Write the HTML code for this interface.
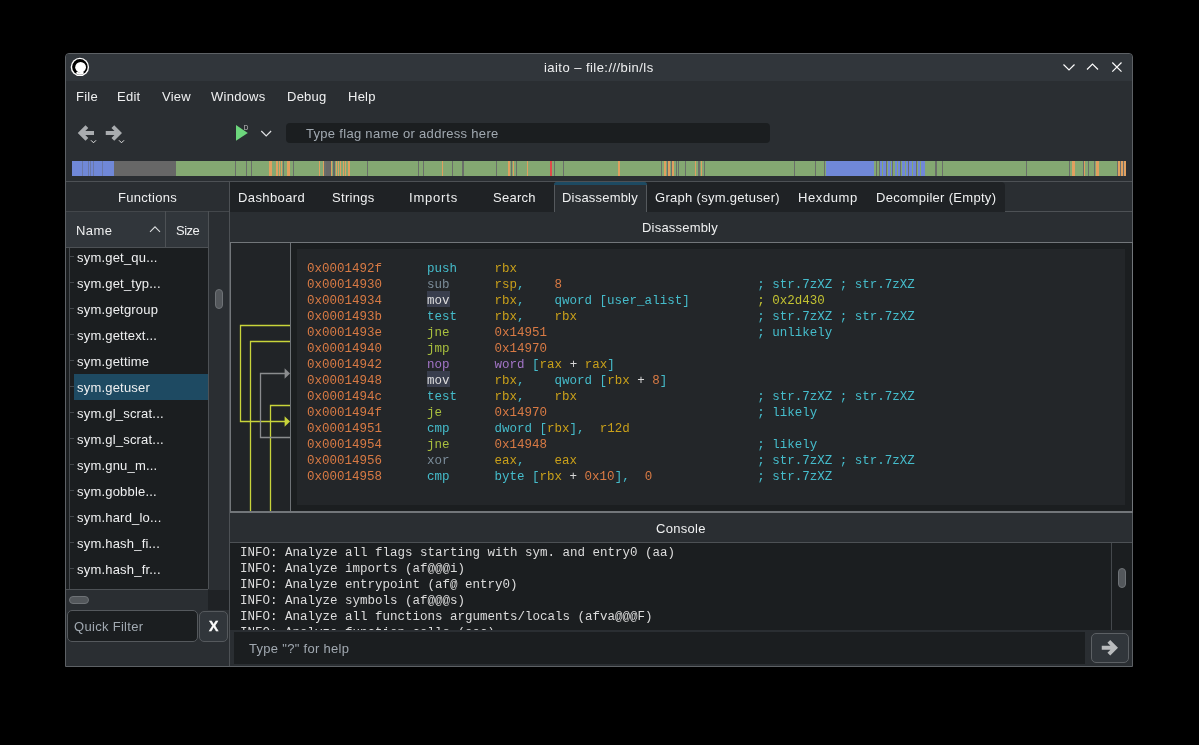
<!DOCTYPE html>
<html><head><meta charset="utf-8">
<style>
*{margin:0;padding:0;box-sizing:border-box}
html,body{width:1199px;height:745px;background:#000;overflow:hidden;font-family:"Liberation Sans",sans-serif;font-size:13px;color:#eff0f1}
.a{position:absolute}
.t{position:absolute;white-space:nowrap;line-height:16px;letter-spacing:0.25px;padding-top:1px}
.m{position:absolute;font-family:"Liberation Mono",monospace;font-size:12.5px;white-space:pre;line-height:16px}
.ad{color:#d87a44}.cy{color:#45bccb}.gy{color:#7b8c99}.go{color:#c9a01a}.jm{color:#a9bf3e}.pu{color:#a274c6}.wh{color:#d8d8d8}.ye{color:#c2c232}.nu{color:#d87a44}
.hl{color:#dcdcdc}
.fn{position:absolute;left:77px;white-space:nowrap;line-height:16px;letter-spacing:0.2px;padding-top:1px}
.tick{position:absolute;left:70px;width:4px;height:1px;background:#4d5155}
.ci{position:absolute;left:240px;font-family:"Liberation Mono",monospace;font-size:12.5px;white-space:pre;line-height:16px;color:#dcdcdc}
</style></head><body>
<div id="root" style="position:absolute;left:0;top:0;width:1199px;height:745px;will-change:transform">

<!-- window frame -->
<div class="a" style="left:65px;top:53px;width:1068px;height:614px;background:#2a2e32;border:1px solid #5d6165;border-radius:4px 4px 0 0"></div>
<div class="a" style="left:66px;top:54px;width:1066px;height:27px;background:#31363b;border-radius:3px 3px 0 0"></div>
<!-- app icon -->
<svg class="a" style="left:68px;top:55px" width="24" height="24" viewBox="0 0 24 24">
<circle cx="11.9" cy="11.9" r="9.2" fill="#fff"/>
<circle cx="11.9" cy="11.9" r="7.8" fill="#000"/>
<circle cx="12.6" cy="12.3" r="5.4" fill="#fff"/>
<path d="M14.6 17.9 A6.6 6.6 0 0 1 9.4 18.0" stroke="#fff" stroke-width="2.4" fill="none" stroke-linecap="round"/>
</svg>
<div class="t" style="left:544px;top:59px;letter-spacing:0.45px">iaito – file:///bin/ls</div>
<!-- window buttons -->
<svg class="a" style="left:1060px;top:58px" width="66" height="18" viewBox="0 0 66 18">
<path d="M3.5 6.5 L9 12 L14.5 6.5" stroke="#fcfcfc" stroke-width="1.2" fill="none"/>
<path d="M27 11.5 L32.5 6 L38 11.5" stroke="#fcfcfc" stroke-width="1.2" fill="none"/>
<path d="M52.3 4.5 L61.5 13.7 M61.5 4.5 L52.3 13.7" stroke="#fcfcfc" stroke-width="1.2" fill="none"/>
</svg>
<!-- menu -->
<div class="t" style="left:76px;top:88px">File</div>
<div class="t" style="left:117px;top:88px">Edit</div>
<div class="t" style="left:162px;top:88px">View</div>
<div class="t" style="left:211px;top:88px">Windows</div>
<div class="t" style="left:287px;top:88px">Debug</div>
<div class="t" style="left:348px;top:88px">Help</div>
<!-- toolbar icons -->
<svg class="a" style="left:0;top:0" width="140" height="150" viewBox="0 0 140 150">
<path d="M77.75 133.00 L85.50 125.20 L88.30 128.00 L85.30 131.00 L94.00 131.00 L94.00 135.00 L85.30 135.00 L88.30 138.00 L85.50 140.80 Z" fill="#a9acaf"/>
<path d="M122.00 133.00 L114.25 125.20 L111.45 128.00 L114.45 131.00 L105.75 131.00 L105.75 135.00 L114.45 135.00 L111.45 138.00 L114.25 140.80 Z" fill="#a9acaf"/>
<path d="M91 140.3 L93.5 142.8 L96 140.3" stroke="#e6e6e6" stroke-width="1" fill="none"/>
<path d="M119 140.3 L121.5 142.8 L124 140.3" stroke="#e6e6e6" stroke-width="1" fill="none"/>
</svg>
<svg class="a" style="left:232px;top:122px" width="44" height="22" viewBox="0 0 44 22">
<path d="M4 3 L15.8 10.9 L4 18.8 Z" fill="#6cd67c"/>
<text x="11.8" y="7.7" font-family="Liberation Sans" font-size="6.4" fill="#c4c4c4">D</text>
<path d="M29.3 9 L34.2 13.9 L39.1 9" stroke="#e0e2e4" stroke-width="1.2" fill="none"/>
</svg>
<!-- search -->
<div class="a" style="left:286px;top:123px;width:484px;height:20px;background:#1b1e20;border-radius:4px"></div>
<div class="t" style="left:306px;top:125px;color:#a1a9b1;letter-spacing:0.3px">Type flag name or address here</div>
<div class="a" style="left:72px;top:161px;width:1054px;height:15px;overflow:hidden"><div class="a" style="left:0.0px;top:0;width:42.0px;height:15px;background:#7088d8"></div><div class="a" style="left:42.0px;top:0;width:61.5px;height:15px;background:#676767"></div><div class="a" style="left:103.5px;top:0;width:650.5px;height:15px;background:#84a872"></div><div class="a" style="left:754.0px;top:0;width:48.0px;height:15px;background:#7088d8"></div><div class="a" style="left:802.0px;top:0;width:54.0px;height:15px;background:#84a872"></div><div class="a" style="left:856.0px;top:0;width:198.0px;height:15px;background:#84a872"></div><div class="a" style="left:10.0px;top:0;width:1.0px;height:15px;background:#6a78a8"></div><div class="a" style="left:16.0px;top:0;width:1.0px;height:15px;background:#6a78a8"></div><div class="a" style="left:18.0px;top:0;width:1.0px;height:15px;background:#6a78a8"></div><div class="a" style="left:21.0px;top:0;width:1.0px;height:15px;background:#6a78a8"></div><div class="a" style="left:30.0px;top:0;width:1.0px;height:15px;background:#6a78a8"></div><div class="a" style="left:163.0px;top:0;width:1.2px;height:15px;background:#6a6e6a"></div><div class="a" style="left:174.0px;top:0;width:1.2px;height:15px;background:#6a6e6a"></div><div class="a" style="left:178.5px;top:0;width:1.2px;height:15px;background:#6a6e6a"></div><div class="a" style="left:211.0px;top:0;width:1.2px;height:15px;background:#6a6e6a"></div><div class="a" style="left:220.5px;top:0;width:1.2px;height:15px;background:#6a6e6a"></div><div class="a" style="left:294.7px;top:0;width:1.2px;height:15px;background:#6a6e6a"></div><div class="a" style="left:346.3px;top:0;width:1.2px;height:15px;background:#6a6e6a"></div><div class="a" style="left:350.5px;top:0;width:1.2px;height:15px;background:#6a6e6a"></div><div class="a" style="left:380.0px;top:0;width:1.2px;height:15px;background:#6a6e6a"></div><div class="a" style="left:390.0px;top:0;width:1.2px;height:15px;background:#6a6e6a"></div><div class="a" style="left:391.0px;top:0;width:1.2px;height:15px;background:#6a6e6a"></div><div class="a" style="left:424.0px;top:0;width:1.2px;height:15px;background:#6a6e6a"></div><div class="a" style="left:439.0px;top:0;width:1.2px;height:15px;background:#6a6e6a"></div><div class="a" style="left:443.8px;top:0;width:1.2px;height:15px;background:#6a6e6a"></div><div class="a" style="left:481.7px;top:0;width:1.2px;height:15px;background:#6a6e6a"></div><div class="a" style="left:490.8px;top:0;width:1.2px;height:15px;background:#6a6e6a"></div><div class="a" style="left:588.8px;top:0;width:1.2px;height:15px;background:#6a6e6a"></div><div class="a" style="left:594.7px;top:0;width:1.2px;height:15px;background:#6a6e6a"></div><div class="a" style="left:598.8px;top:0;width:1.2px;height:15px;background:#6a6e6a"></div><div class="a" style="left:603.8px;top:0;width:1.2px;height:15px;background:#6a6e6a"></div><div class="a" style="left:606.3px;top:0;width:1.2px;height:15px;background:#6a6e6a"></div><div class="a" style="left:613.0px;top:0;width:1.2px;height:15px;background:#6a6e6a"></div><div class="a" style="left:625.5px;top:0;width:1.2px;height:15px;background:#6a6e6a"></div><div class="a" style="left:626.5px;top:0;width:1.2px;height:15px;background:#6a6e6a"></div><div class="a" style="left:632.0px;top:0;width:1.2px;height:15px;background:#6a6e6a"></div><div class="a" style="left:722.2px;top:0;width:1.2px;height:15px;background:#6a6e6a"></div><div class="a" style="left:743.0px;top:0;width:1.2px;height:15px;background:#6a6e6a"></div><div class="a" style="left:752.2px;top:0;width:1.2px;height:15px;background:#6a6e6a"></div><div class="a" style="left:863.0px;top:0;width:1.2px;height:15px;background:#6a6e6a"></div><div class="a" style="left:864.0px;top:0;width:1.2px;height:15px;background:#6a6e6a"></div><div class="a" style="left:870.0px;top:0;width:1.2px;height:15px;background:#6a6e6a"></div><div class="a" style="left:953.8px;top:0;width:1.2px;height:15px;background:#6a6e6a"></div><div class="a" style="left:997.0px;top:0;width:1.2px;height:15px;background:#6a6e6a"></div><div class="a" style="left:1010.5px;top:0;width:1.2px;height:15px;background:#6a6e6a"></div><div class="a" style="left:1015.5px;top:0;width:1.2px;height:15px;background:#6a6e6a"></div><div class="a" style="left:1022.2px;top:0;width:1.2px;height:15px;background:#6a6e6a"></div><div class="a" style="left:1044.7px;top:0;width:1.2px;height:15px;background:#6a6e6a"></div><div class="a" style="left:1048.3px;top:0;width:1.2px;height:15px;background:#6a6e6a"></div><div class="a" style="left:1051.0px;top:0;width:1.2px;height:15px;background:#6a6e6a"></div><div class="a" style="left:197.2px;top:0;width:2.5px;height:15px;background:#e0a060"></div><div class="a" style="left:203.8px;top:0;width:2.5px;height:15px;background:#e0a060"></div><div class="a" style="left:206.7px;top:0;width:1.6px;height:15px;background:#e0a060"></div><div class="a" style="left:208.8px;top:0;width:1.7px;height:15px;background:#e0a060"></div><div class="a" style="left:214.7px;top:0;width:3.3px;height:15px;background:#e0a060"></div><div class="a" style="left:247.2px;top:0;width:1.0px;height:15px;background:#e0a060"></div><div class="a" style="left:250.5px;top:0;width:1.0px;height:15px;background:#e0a060"></div><div class="a" style="left:259.3px;top:0;width:1.0px;height:15px;background:#e0a060"></div><div class="a" style="left:264.0px;top:0;width:1.0px;height:15px;background:#e0a060"></div><div class="a" style="left:266.0px;top:0;width:1.0px;height:15px;background:#e0a060"></div><div class="a" style="left:268.0px;top:0;width:1.0px;height:15px;background:#e0a060"></div><div class="a" style="left:270.5px;top:0;width:1.0px;height:15px;background:#e0a060"></div><div class="a" style="left:273.0px;top:0;width:1.0px;height:15px;background:#e0a060"></div><div class="a" style="left:276.0px;top:0;width:1.5px;height:15px;background:#e0a060"></div><div class="a" style="left:370.0px;top:0;width:1.3px;height:15px;background:#e0a060"></div><div class="a" style="left:436.3px;top:0;width:1.7px;height:15px;background:#e0a060"></div><div class="a" style="left:441.0px;top:0;width:1.3px;height:15px;background:#e0a060"></div><div class="a" style="left:455.0px;top:0;width:1.0px;height:15px;background:#e0a060"></div><div class="a" style="left:546.3px;top:0;width:1.4px;height:15px;background:#e0a060"></div><div class="a" style="left:591.8px;top:0;width:2.0px;height:15px;background:#e0a060"></div><div class="a" style="left:596.3px;top:0;width:1.7px;height:15px;background:#e0a060"></div><div class="a" style="left:600.0px;top:0;width:2.2px;height:15px;background:#e0a060"></div><div class="a" style="left:622.7px;top:0;width:1.3px;height:15px;background:#e0a060"></div><div class="a" style="left:628.8px;top:0;width:1.7px;height:15px;background:#e0a060"></div><div class="a" style="left:1000.2px;top:0;width:2.5px;height:15px;background:#e0a060"></div><div class="a" style="left:1011.7px;top:0;width:1.6px;height:15px;background:#e0a060"></div><div class="a" style="left:1024.3px;top:0;width:2.9px;height:15px;background:#e0a060"></div><div class="a" style="left:1046.3px;top:0;width:2.0px;height:15px;background:#e0a060"></div><div class="a" style="left:1049.3px;top:0;width:1.7px;height:15px;background:#e0a060"></div><div class="a" style="left:1052.0px;top:0;width:2.0px;height:15px;background:#e0a060"></div><div class="a" style="left:253.8px;top:0;width:5.5px;height:15px;background:#676767"></div><div class="a" style="left:260.5px;top:0;width:2.5px;height:15px;background:#676767"></div><div class="a" style="left:251.5px;top:0;width:2.3px;height:15px;background:#6a6e6a"></div><div class="a" style="left:478.0px;top:0;width:2.0px;height:15px;background:#e04a4a"></div><div class="a" style="left:802.2px;top:0;width:2.0px;height:15px;background:#84a872"></div><div class="a" style="left:804.2px;top:0;width:1.0px;height:15px;background:#6a6e6a"></div><div class="a" style="left:805.2px;top:0;width:2.0px;height:15px;background:#84a872"></div><div class="a" style="left:807.2px;top:0;width:1.0px;height:15px;background:#6a6e6a"></div><div class="a" style="left:808.2px;top:0;width:2.0px;height:15px;background:#7088d8"></div><div class="a" style="left:810.2px;top:0;width:1.0px;height:15px;background:#84a872"></div><div class="a" style="left:811.2px;top:0;width:3.0px;height:15px;background:#7088d8"></div><div class="a" style="left:814.2px;top:0;width:1.0px;height:15px;background:#6a6e6a"></div><div class="a" style="left:815.2px;top:0;width:1.0px;height:15px;background:#84a872"></div><div class="a" style="left:816.2px;top:0;width:2.0px;height:15px;background:#7088d8"></div><div class="a" style="left:818.2px;top:0;width:1.0px;height:15px;background:#84a872"></div><div class="a" style="left:819.2px;top:0;width:1.0px;height:15px;background:#7088d8"></div><div class="a" style="left:820.2px;top:0;width:1.0px;height:15px;background:#6a6e6a"></div><div class="a" style="left:821.2px;top:0;width:2.0px;height:15px;background:#84a872"></div><div class="a" style="left:823.2px;top:0;width:2.0px;height:15px;background:#7088d8"></div><div class="a" style="left:825.2px;top:0;width:1.0px;height:15px;background:#84a872"></div><div class="a" style="left:826.2px;top:0;width:2.0px;height:15px;background:#7088d8"></div><div class="a" style="left:828.2px;top:0;width:1.0px;height:15px;background:#6a6e6a"></div><div class="a" style="left:829.2px;top:0;width:1.0px;height:15px;background:#84a872"></div><div class="a" style="left:830.2px;top:0;width:3.0px;height:15px;background:#7088d8"></div><div class="a" style="left:833.2px;top:0;width:1.0px;height:15px;background:#84a872"></div><div class="a" style="left:834.2px;top:0;width:2.0px;height:15px;background:#7088d8"></div><div class="a" style="left:836.2px;top:0;width:1.0px;height:15px;background:#6a6e6a"></div><div class="a" style="left:837.2px;top:0;width:3.0px;height:15px;background:#7088d8"></div><div class="a" style="left:840.2px;top:0;width:1.0px;height:15px;background:#84a872"></div><div class="a" style="left:841.2px;top:0;width:3.0px;height:15px;background:#7088d8"></div><div class="a" style="left:844.2px;top:0;width:1.0px;height:15px;background:#6a6e6a"></div><div class="a" style="left:845.2px;top:0;width:1.0px;height:15px;background:#84a872"></div><div class="a" style="left:846.2px;top:0;width:2.0px;height:15px;background:#7088d8"></div><div class="a" style="left:848.2px;top:0;width:1.0px;height:15px;background:#84a872"></div><div class="a" style="left:849.2px;top:0;width:4.0px;height:15px;background:#7088d8"></div></div>
<div class="a" style="left:66px;top:181px;width:1066px;height:1px;background:#4d5155"></div>

<!-- left dock -->
<div class="t" style="left:118px;top:189px;letter-spacing:0.3px">Functions</div>
<div class="a" style="left:66px;top:211px;width:142px;height:36px;background:#31363b"></div>
<div class="a" style="left:66px;top:211px;width:163px;height:1px;background:#43474b"></div>
<div class="a" style="left:208px;top:211px;width:1px;height:378px;background:#4d5155"></div>
<div class="a" style="left:66px;top:247px;width:142px;height:1px;background:#4d5155"></div>
<div class="a" style="left:165px;top:211px;width:1px;height:36px;background:#4d5155"></div>
<div class="t" style="left:76px;top:222px;letter-spacing:0.4px">Name</div>
<svg class="a" style="left:148px;top:223px" width="14" height="12" viewBox="0 0 14 12"><path d="M2 8.8 L7 3.8 L12 8.8" stroke="#dadcde" stroke-width="1.1" fill="none"/></svg>
<div class="t" style="left:176px;top:222px;letter-spacing:-0.5px">Size</div>
<div class="a" style="left:66px;top:248px;width:142px;height:341px;background:#1b1e20;overflow:hidden">
<div class="a" style="left:3px;top:0;width:1px;height:341px;background:#44484c"></div>
<div class="a" style="left:4px;top:8px;width:4px;height:1px;background:#44484c"></div>
<div class="fn" style="left:11px;top:1px">sym.get_qu...</div>
<div class="a" style="left:4px;top:34px;width:4px;height:1px;background:#44484c"></div>
<div class="fn" style="left:11px;top:27px">sym.get_typ...</div>
<div class="a" style="left:4px;top:60px;width:4px;height:1px;background:#44484c"></div>
<div class="fn" style="left:11px;top:53px">sym.getgroup</div>
<div class="a" style="left:4px;top:86px;width:4px;height:1px;background:#44484c"></div>
<div class="fn" style="left:11px;top:79px">sym.gettext...</div>
<div class="a" style="left:4px;top:112px;width:4px;height:1px;background:#44484c"></div>
<div class="fn" style="left:11px;top:105px">sym.gettime</div>
<div class="a" style="left:8px;top:126px;width:134px;height:26px;background:#1e4a62"></div>
<div class="a" style="left:4px;top:138px;width:4px;height:1px;background:#44484c"></div>
<div class="fn" style="left:11px;top:131px">sym.getuser</div>
<div class="a" style="left:4px;top:164px;width:4px;height:1px;background:#44484c"></div>
<div class="fn" style="left:11px;top:157px">sym.gl_scrat...</div>
<div class="a" style="left:4px;top:190px;width:4px;height:1px;background:#44484c"></div>
<div class="fn" style="left:11px;top:183px">sym.gl_scrat...</div>
<div class="a" style="left:4px;top:216px;width:4px;height:1px;background:#44484c"></div>
<div class="fn" style="left:11px;top:209px">sym.gnu_m...</div>
<div class="a" style="left:4px;top:242px;width:4px;height:1px;background:#44484c"></div>
<div class="fn" style="left:11px;top:235px">sym.gobble...</div>
<div class="a" style="left:4px;top:268px;width:4px;height:1px;background:#44484c"></div>
<div class="fn" style="left:11px;top:261px">sym.hard_lo...</div>
<div class="a" style="left:4px;top:294px;width:4px;height:1px;background:#44484c"></div>
<div class="fn" style="left:11px;top:287px">sym.hash_fi...</div>
<div class="a" style="left:4px;top:320px;width:4px;height:1px;background:#44484c"></div>
<div class="fn" style="left:11px;top:313px">sym.hash_fr...</div>
</div>

<div class="a" style="left:66px;top:589px;width:142px;height:1px;background:#4d5155"></div>
<!-- v scrollbar -->
<div class="a" style="left:215px;top:289px;width:8px;height:20px;background:#53575b;border:1px solid #6e7276;border-radius:4px"></div>
<!-- h scrollbar -->
<div class="a" style="left:69px;top:596px;width:20px;height:8px;background:#53575b;border:1px solid #6e7276;border-radius:4px"></div>
<div class="a" style="left:208px;top:590px;width:21px;height:20px;background:#1f2225"></div>
<!-- quick filter -->
<div class="a" style="left:67px;top:610px;width:131px;height:32px;background:#1b1e20;border:1px solid #55595d;border-radius:5px"></div>
<div class="t" style="left:74px;top:618px;color:#a1a9b1;letter-spacing:0.3px">Quick Filter</div>
<div class="a" style="left:199px;top:611px;width:29px;height:31px;background:#31363b;border:1px solid #55595d;border-radius:5px"></div>
<div class="t" style="left:209px;top:617px;font-weight:bold;font-size:14px;color:#fcfcfc;-webkit-text-stroke:0.4px #fcfcfc">X</div>
<div class="a" style="left:229px;top:182px;width:1px;height:484px;background:#4d5155"></div>

<!-- tabs -->
<div class="a" style="left:230px;top:182px;width:775px;height:30px;background:#1f2225;border-radius:0 4px 0 0"></div>
<div class="a" style="left:1005px;top:211px;width:127px;height:1px;background:#4d5155"></div>
<div class="a" style="left:554px;top:182px;width:93px;height:30px;background:#2a2e32;border:1px solid #55595d;border-top:none;border-bottom:none;border-radius:4px 4px 0 0"></div><div class="a" style="left:554px;top:182px;width:93px;height:3px;background:#1d4a62;border-radius:4px 4px 0 0"></div>
<div class="t" style="left:238px;top:189px;letter-spacing:0.4px">Dashboard</div>
<div class="t" style="left:332px;top:189px;letter-spacing:0.3px">Strings</div>
<div class="t" style="left:409px;top:189px;letter-spacing:0.8px">Imports</div>
<div class="t" style="left:493px;top:189px">Search</div>
<div class="t" style="left:562px;top:189px;letter-spacing:0.2px">Disassembly</div>
<div class="t" style="left:655px;top:189px;letter-spacing:0.3px">Graph (sym.getuser)</div>
<div class="t" style="left:798px;top:189px;letter-spacing:0.6px">Hexdump</div>
<div class="t" style="left:876px;top:189px;letter-spacing:0.3px">Decompiler (Empty)</div>
<!-- disassembly dock -->
<div class="t" style="left:642px;top:219px;letter-spacing:0.2px">Disassembly</div>
<div class="a" style="left:230px;top:242px;width:903px;height:271px;background:#1b1e20;border:1px solid #72767a;border-bottom:2px solid #72767a"></div>
<div class="a" style="left:231px;top:243px;width:59px;height:268px;background:#212427"></div>
<div class="a" style="left:297px;top:249px;width:828px;height:256px;background:#232629"></div>
<div class="a" style="left:290px;top:243px;width:1px;height:268px;background:#6e7276"></div>
<svg class="a" style="left:230px;top:243px" width="61" height="268" viewBox="230 243 61 268">
<g fill="none" stroke-width="1.3">
<path d="M290 325.5 H240.5 V421.5 H285" stroke="#c8d43a"/>
<path d="M290 341.5 H250.5 V511" stroke="#c8d43a"/>
<path d="M290 405.5 H270.5 V511" stroke="#c8d43a"/>
<path d="M285 373.5 H260.5 V437.5 H290" stroke="#8a8c8e"/>
</g>
<path d="M284.6 368.2 L290 373.5 L284.6 378.8 Z" fill="#8a8c8e"/>
<path d="M284.6 416.2 L290 421.5 L284.6 426.8 Z" fill="#c8d43a"/>
</svg>
<div class="a" style="left:427px;top:291px;width:23px;height:16px;background:#393e4d"></div>
<div class="a" style="left:427px;top:371px;width:23px;height:16px;background:#393e4d"></div>
<div class="m" style="left:307px;top:261px"><span class="ad">0x0001492f</span>      <span class="cy">push</span>     <span class="go">rbx</span>
<span class="ad">0x00014930</span>      <span class="gy">sub</span>      <span class="go">rsp</span><span class="cy">,</span>    <span class="ad">8</span>                          <span class="cy">; str.7zXZ ; str.7zXZ</span>
<span class="ad">0x00014934</span>      <span class="hl">mov</span>      <span class="go">rbx</span><span class="cy">,</span>    <span class="cy">qword [user_alist]</span>         <span class="ye">; 0x2d430</span>
<span class="ad">0x0001493b</span>      <span class="cy">test</span>     <span class="go">rbx</span><span class="cy">,</span>    <span class="go">rbx</span>                        <span class="cy">; str.7zXZ ; str.7zXZ</span>
<span class="ad">0x0001493e</span>      <span class="jm">jne</span>      <span class="ad">0x14951</span>                            <span class="cy">; unlikely</span>
<span class="ad">0x00014940</span>      <span class="jm">jmp</span>      <span class="ad">0x14970</span>
<span class="ad">0x00014942</span>      <span class="pu">nop</span>      <span class="pu">word</span> <span class="cy">[</span><span class="go">rax</span><span class="wh"> + </span><span class="go">rax</span><span class="cy">]</span>
<span class="ad">0x00014948</span>      <span class="hl">mov</span>      <span class="go">rbx</span><span class="cy">,</span>    <span class="cy">qword [</span><span class="go">rbx</span><span class="wh"> + </span><span class="ad">8</span><span class="cy">]</span>
<span class="ad">0x0001494c</span>      <span class="cy">test</span>     <span class="go">rbx</span><span class="cy">,</span>    <span class="go">rbx</span>                        <span class="cy">; str.7zXZ ; str.7zXZ</span>
<span class="ad">0x0001494f</span>      <span class="jm">je</span>       <span class="ad">0x14970</span>                            <span class="cy">; likely</span>
<span class="ad">0x00014951</span>      <span class="cy">cmp</span>      <span class="cy">dword [</span><span class="go">rbx</span><span class="cy">],</span>  <span class="go">r12d</span>
<span class="ad">0x00014954</span>      <span class="jm">jne</span>      <span class="ad">0x14948</span>                            <span class="cy">; likely</span>
<span class="ad">0x00014956</span>      <span class="gy">xor</span>      <span class="go">eax</span><span class="cy">,</span>    <span class="go">eax</span>                        <span class="cy">; str.7zXZ ; str.7zXZ</span>
<span class="ad">0x00014958</span>      <span class="cy">cmp</span>      <span class="cy">byte [</span><span class="go">rbx</span><span class="wh"> + </span><span class="ad">0x10</span><span class="cy">],</span>  <span class="ad">0</span>              <span class="cy">; str.7zXZ</span></div>

<!-- console dock -->
<div class="t" style="left:656px;top:520px;letter-spacing:0.3px">Console</div>
<div class="a" style="left:230px;top:542px;width:902px;height:1px;background:#4d5155"></div>
<div class="a" style="left:230px;top:543px;width:902px;height:87px;background:#1b1e20;overflow:hidden">
<div class="ci" style="left:10px;top:2px">INFO: Analyze all flags starting with sym. and entry0 (aa)
INFO: Analyze imports (af@@@i)
INFO: Analyze entrypoint (af@ entry0)
INFO: Analyze symbols (af@@@s)
INFO: Analyze all functions arguments/locals (afva@@@F)
INFO: Analyze function calls (aac)</div>
<div class="a" style="left:881px;top:0;width:1px;height:87px;background:#44484c"></div>
<div class="a" style="left:882px;top:0;width:20px;height:87px;background:#1b1e20"></div>
<div class="a" style="left:888px;top:25px;width:8px;height:20px;background:#53575b;border:1px solid #6e7276;border-radius:4px"></div>
</div>
<div class="a" style="left:234px;top:632px;width:851px;height:32px;background:#1b1e20"></div>
<div class="t" style="left:249px;top:640px;color:#a1a9b1;letter-spacing:0.3px">Type "?" for help</div>
<div class="a" style="left:1091px;top:633px;width:38px;height:30px;background:#31363b;border:1px solid #5c6064;border-radius:5px"></div>
<svg class="a" style="left:1090px;top:630px" width="40" height="36" viewBox="1090 630 40 36"><path d="M1118.00 647.70 L1110.25 639.90 L1107.45 642.70 L1110.45 645.70 L1101.75 645.70 L1101.75 649.70 L1110.45 649.70 L1107.45 652.70 L1110.25 655.50 Z" fill="#b9bbbd"/></svg>
</div>
</body></html>
